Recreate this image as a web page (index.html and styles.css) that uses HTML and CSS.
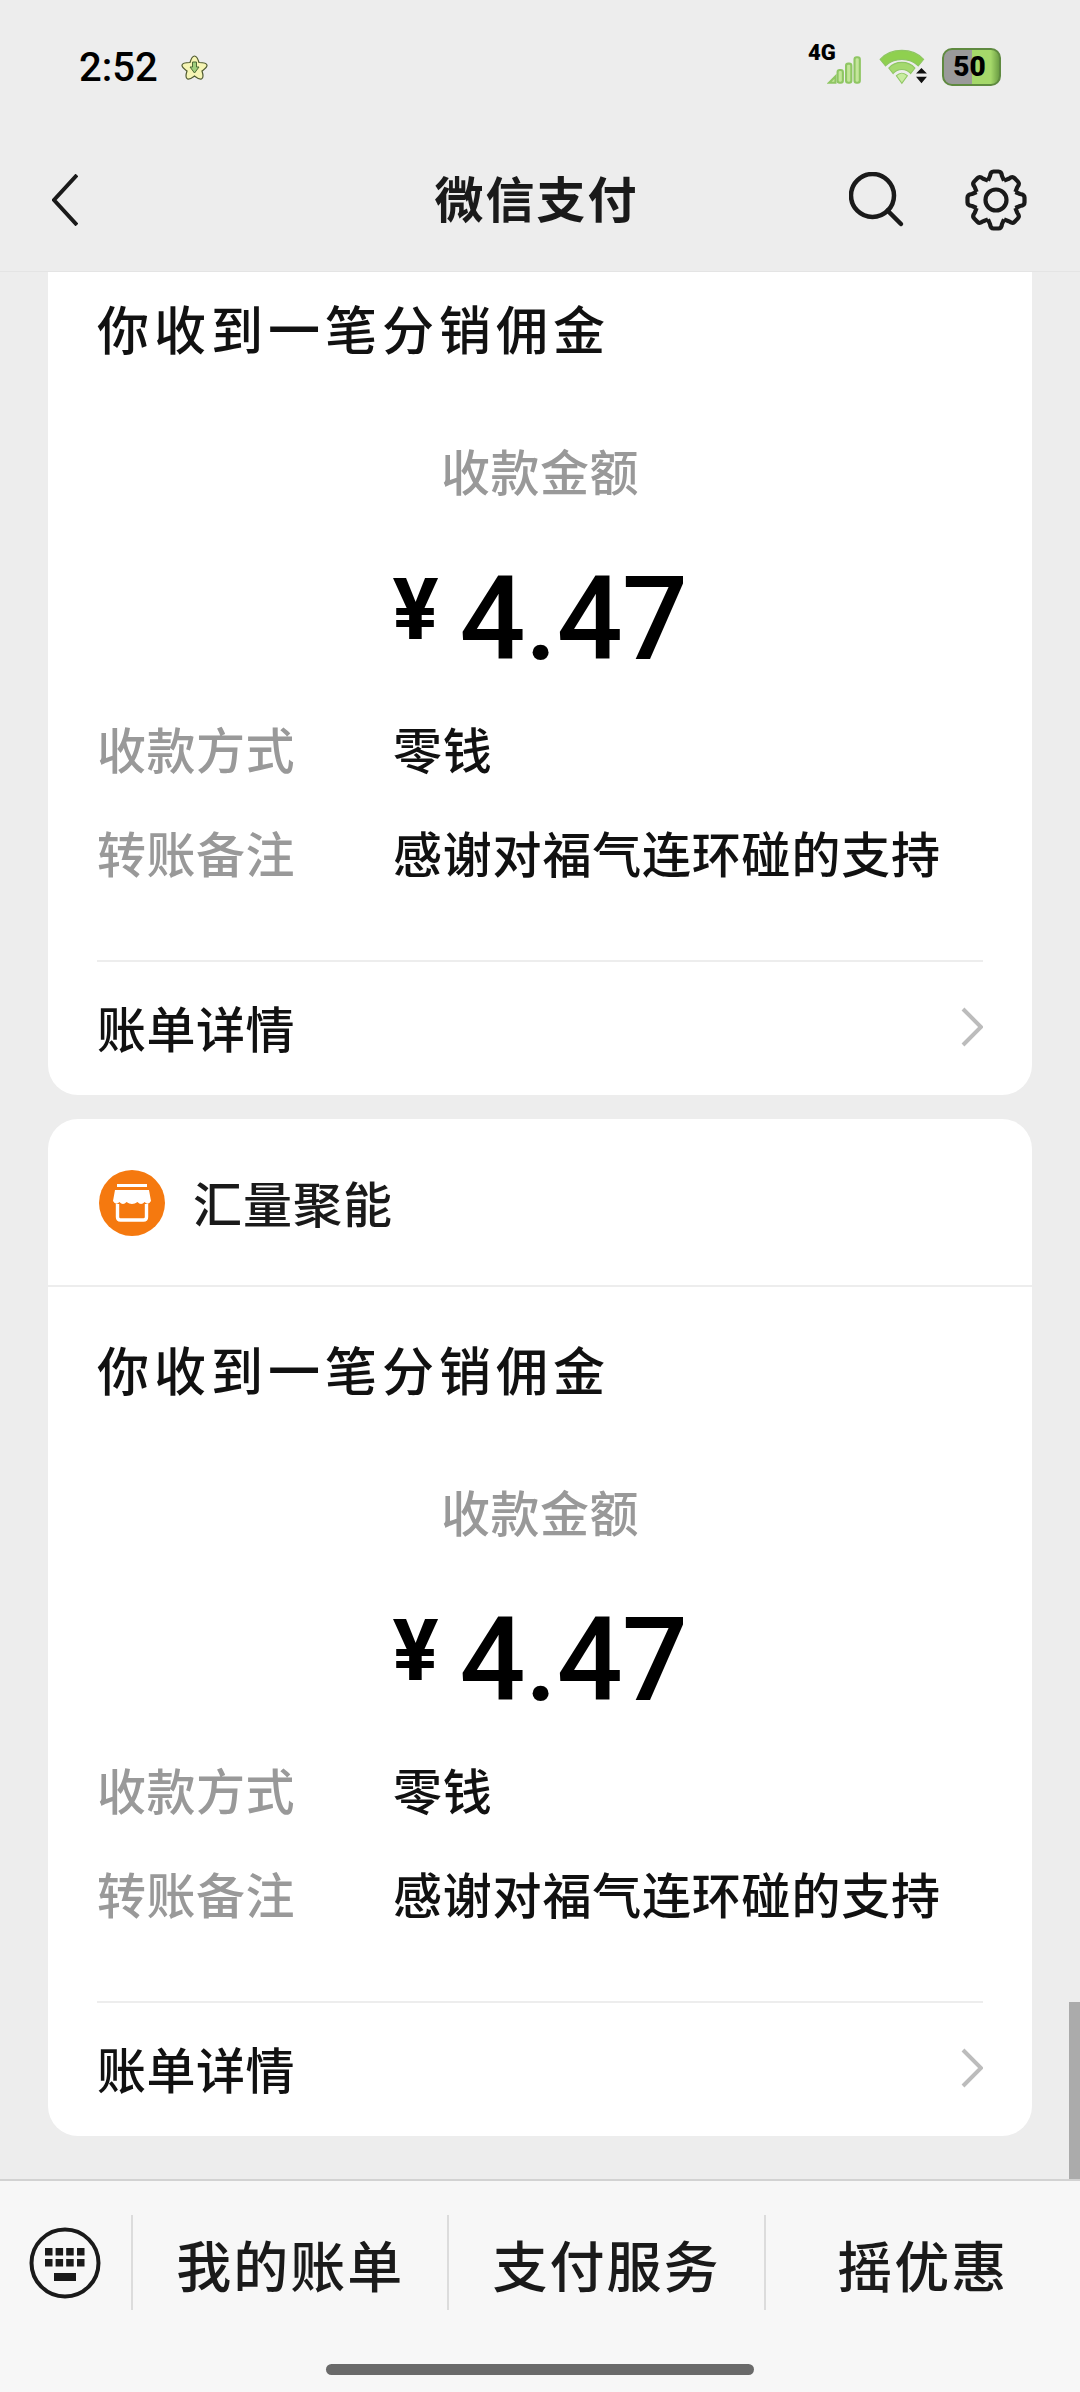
FILE: index.html
```html
<!DOCTYPE html>
<html lang="zh-CN">
<head>
<meta charset="utf-8">
<title>微信支付</title>
<link rel="stylesheet" href="styles.css">
</head>
<body>
<div class="page">
  <div class="status">
    <div class="status-left">
      <span class="time">2:52</span>
      <svg class="flower" viewBox="0 0 27 25"><path d="M13.5 1C15.500 1 17 4 18 7.500C21 7.500 25.500 7.500 26 10C26.300 12.500 23 14.500 21 16C22 19 22.500 23 20.500 24C18 24.700 15.500 22.500 13.500 21C11.500 22.500 9 24.700 6.500 24C4.500 23 5 19 6 16C4 14.500 .7 12.500 1 10C1.500 7.500 6 7.500 9 7.500C10 4 11.500 1 13.500 1Z" fill="#f6f5b4" stroke="#4f5a30" stroke-width="1.200"/><path d="M11.500 7H15.500V12H18L13.500 18L9 12H11.500Z" fill="#9fce7c" stroke="#4d6b35" stroke-width="1"/></svg>
    </div>
    <div class="status-right">
      <div class="net">
        <span class="net-label">4G</span>
        <svg class="signal" viewBox="0 0 34 28"><g fill="#c4e69a" stroke="#8fc663" stroke-width="2"><path d="M2 26L8 20V26Z"/><rect x="10" y="14" width="5" height="12" rx="2"/><rect x="18" y="8" width="5" height="18" rx="2"/><rect x="26" y="2" width="5" height="24" rx="2"/></g></svg>
      </div>
      <svg class="wifi" viewBox="2 4 45 32"><path d="M3 13C13 2 33 2 43 13L38 19C30 11 16 11 8 19Z" fill="#8fd04f" stroke="#8fc663"/><path d="M11 21C17 14 29 14 35 21L31 26C27 21 19 21 15 26Z" fill="#a4d96e" stroke="#8fc663"/><path d="M18 28C21 25 25 25 28 28L23 35Z" fill="#c8eca0" stroke="#8fc663"/><path d="M37 22L42 27H32ZM37 36L32 30H42Z" fill="#111" transform="translate(4 -1)"/></svg>
      <div class="battery"><span class="battery-level">50</span></div>
    </div>
  </div>

  <header class="nav">
    <svg class="nav-back" viewBox="0 0 26 52"><path d="M25 1L2 26L25 51" fill="none" stroke="#1a1a1a" stroke-width="4"/></svg>
    <h1 class="nav-title">微信支付</h1>
    <div class="nav-actions">
      <svg class="nav-search" viewBox="0 0 56 56"><circle cx="23.500" cy="23.500" r="21.500" fill="none" stroke="#1a1a1a" stroke-width="4.500"/><path d="M38.500 38.500L52 52" stroke="#1a1a1a" stroke-width="4.500" stroke-linecap="round"/></svg>
      <svg class="nav-gear" viewBox="-31 -31 62 62">
        <defs><path id="tooth" d="M-8.040 -19.400L-6 -24Q-5.500 -28.500 -2.500 -28.500L2.500 -28.500Q5.500 -28.500 6 -24L8.040 -19.400" fill="none" stroke="#1a1a1a" stroke-width="4.200" stroke-linejoin="round"/></defs>
        <use href="#tooth"/><use href="#tooth" transform="rotate(45)"/><use href="#tooth" transform="rotate(90)"/><use href="#tooth" transform="rotate(135)"/><use href="#tooth" transform="rotate(180)"/><use href="#tooth" transform="rotate(225)"/><use href="#tooth" transform="rotate(270)"/><use href="#tooth" transform="rotate(315)"/>
        <circle r="10.500" fill="none" stroke="#1a1a1a" stroke-width="4.200"/>
      </svg>
    </div>
  </header>

  <main class="list">
    <section class="card card-clipped">
      <div class="body body-clipped">
        <h2 class="title">你收到一笔分销佣金</h2>
        <p class="label">收款金额</p>
        <div class="amount"><span class="currency">¥</span><span class="value">4.47</span></div>
        <dl class="fields">
          <div class="field"><dt>收款方式</dt><dd>零钱</dd></div>
          <div class="field"><dt>转账备注</dt><dd>感谢对福气连环碰的支持</dd></div>
        </dl>
        <div class="detail"><span class="detail-text">账单详情</span><svg class="chev" viewBox="0 0 22 40"><path d="M2 2L20 20L2 38" fill="none" stroke="#bcbcbc" stroke-width="4"/></svg></div>
      </div>
    </section>

    <section class="card">
      <div class="merchant">
        <svg class="shop" viewBox="0 0 66 66"><circle cx="33" cy="33" r="33" fill="#f5790f"/><rect x="18" y="14" width="30" height="3" fill="#fff"/><path d="M16 20H50L52 31Q49 36 45.600 32Q42 36 38.500 32Q33 36 27.500 32Q24 36 20.400 32Q17 36 14 31Z" fill="#fff"/><path d="M18.500 34V47Q18.500 50 21.500 50H44.500Q47.500 50 47.500 47V34" fill="none" stroke="#fff" stroke-width="3.400"/></svg>
        <span class="merchant-name">汇量聚能</span>
      </div>
      <div class="body">
        <h2 class="title">你收到一笔分销佣金</h2>
        <p class="label">收款金额</p>
        <div class="amount"><span class="currency">¥</span><span class="value">4.47</span></div>
        <dl class="fields">
          <div class="field"><dt>收款方式</dt><dd>零钱</dd></div>
          <div class="field"><dt>转账备注</dt><dd>感谢对福气连环碰的支持</dd></div>
        </dl>
        <div class="detail"><span class="detail-text">账单详情</span><svg class="chev" viewBox="0 0 22 40"><path d="M2 2L20 20L2 38" fill="none" stroke="#bcbcbc" stroke-width="4"/></svg></div>
      </div>
    </section>
    <div class="scrollbar"></div>
  </main>

  <footer class="footer">
    <div class="menu">
      <div class="kbd">
        <svg class="kbd-icon" viewBox="0 0 72 72"><circle cx="36" cy="36" r="33.500" fill="none" stroke="#1a1a1a" stroke-width="4"/><path d="M16 21h7.500v7.500h-7.500zM26.600 21h7.500v7.500h-7.500zM37.200 21h7.500v7.500h-7.500zM48 21h7.500v7.500h-7.500zM16 32h7.500v7.500h-7.500zM26.600 32h7.500v7.500h-7.500zM37.200 32h7.500v7.500h-7.500zM48 32h7.500v7.500h-7.500zM25 46h22v8H25z" fill="#1a1a1a"/></svg>
      </div>
      <div class="menu-item">我的账单</div>
      <div class="menu-item">支付服务</div>
      <div class="menu-item">摇优惠</div>
    </div>
    <div class="home-bar"></div>
  </footer>
</div>
</body>
</html>
```
FILE: styles.css
```css
* { box-sizing: border-box; }
html, body { margin: 0; padding: 0; }
body {
  font-family: "Noto Sans CJK SC", "Noto Sans", sans-serif;
  background: #ededed;
  color: #111;
}
.page {
  width: 1080px;
  height: 2392px;
  display: flex;
  flex-direction: column;
  overflow: hidden;
}
.status {
  height: 100px;
  flex: none;
  display: flex;
  justify-content: space-between;
  align-items: center;
  padding: 36px 79px 0 79px;
}
.status-left { display: flex; align-items: center; gap: 23px; margin-top: -1px; }
.time {
  font-family: Roboto, sans-serif;
  font-weight: 500;
  font-size: 40px;
  line-height: 46px;
  color: #000;
}
.flower { width: 27px; height: 25px; display: block; }
.status-right { display: flex; align-items: center; margin-top: -3px; }
.net { position: relative; width: 56px; height: 40px; }
.net-label {
  position: absolute;
  left: 0;
  top: -6px;
  font-family: Roboto, sans-serif;
  font-weight: 900;
  font-size: 22px;
  line-height: 24px;
  color: #000;
}
.signal { position: absolute; left: 19px; top: 8px; width: 36px; height: 30px; }
.wifi { width: 49px; height: 36px; margin-left: 15px; margin-right: 14px; }
.battery {
  width: 59px;
  height: 38px;
  border-radius: 10px;
  border: 2px solid #5f8a40;
  background: linear-gradient(90deg, #9a9a9a 0 51%, #a5d86a 51% 85%, #6d9f45 100%);
  display: flex;
  align-items: center;
  justify-content: center;
  padding-right: 4px;
}
.battery-level {
  font-family: Roboto, sans-serif;
  font-weight: 900;
  font-size: 28px;
  line-height: 30px;
  color: #000;
}

.nav {
  height: 172px;
  flex: none;
  display: grid;
  grid-template-columns: 1fr auto 1fr;
  align-items: center;
  padding: 28px 53px 0 52px;
  border-bottom: 1px solid #e4e4e4;
}
.nav-back { width: 26px; height: 52px; display: block; }
.nav-title {
  margin: -5px 6px 0 0;
  font-size: 49px;
  font-weight: 700;
  line-height: 60px;
  letter-spacing: 2px;
  color: #1a1a1a;
}
.nav-actions { display: flex; align-items: center; justify-content: flex-end; gap: 60px; }
.nav-search { width: 56px; height: 56px; display: block; }
.nav-gear { width: 62px; height: 62px; display: block; }

.list {
  flex: 1;
  position: relative;
  overflow: hidden;
  padding: 0 48px;
  display: flex;
  flex-direction: column;
  gap: 24px;
}
.scrollbar {
  position: absolute;
  right: 0;
  bottom: 0;
  width: 11px;
  height: 177px;
  background: #ababab;
}
.card {
  background: #fff;
  border-radius: 30px;
  flex: none;
}
.card-clipped { border-radius: 0 0 30px 30px; }
.merchant {
  height: 168px;
  border-bottom: 2px solid #ededed;
  display: flex;
  align-items: center;
  gap: 28px;
  padding: 2px 51px 0;
}
.shop { width: 66px; height: 66px; display: block; }
.merchant-name {
  font-size: 49px;
  font-weight: 500;
  line-height: 60px;
  letter-spacing: 1px;
  margin-top: -3px;
  color: #1a1a1a;
}
.body { padding: 47px 49px 0; }
.body-clipped { padding-top: 21px; }
.title {
  margin: 0;
  font-size: 52px;
  font-weight: 500;
  line-height: 70px;
  letter-spacing: 5px;
  color: #111;
}
.label {
  margin: 77px 0 0;
  text-align: center;
  font-size: 49px;
  font-weight: 500;
  line-height: 60px;
  letter-spacing: 0.500px;
  color: #999;
}
.amount {
  margin-top: 49px;
  height: 140px;
  display: flex;
  justify-content: center;
  color: #000;
  font-family: Roboto, sans-serif;
  font-weight: 500;
}
.currency { font-size: 86px; font-weight: 700; line-height: 122px; margin-right: 21px; }
.value { font-size: 116px; line-height: 140px; letter-spacing: -0.500px; }
.fields { margin: 29px 0 0; display: flex; flex-direction: column; gap: 44px; }
.field { display: flex; font-size: 49px; font-weight: 500; line-height: 60px; letter-spacing: 0.500px; }
.field dt { width: 296px; color: #999; flex: none; }
.field dd { margin: 0; color: #111; letter-spacing: 0.800px; }
.detail {
  margin-top: 78px;
  height: 135px;
  border-top: 2px solid #ededed;
  display: flex;
  justify-content: space-between;
  align-items: center;
  font-size: 49px;
  font-weight: 500;
  letter-spacing: 0.500px;
  color: #111;
}
.detail-text { line-height: 60px; margin-top: -4px; }
.chev { width: 22px; height: 40px; display: block; margin-top: -4px; }

.footer {
  height: 213px;
  flex: none;
  background: #f7f7f7;
  border-top: 2px solid #d2d2d2;
  display: flex;
  flex-direction: column;
}
.menu { display: flex; align-items: center; margin-top: 34px; height: 95px; }
.kbd { width: 131px; display: flex; justify-content: center; padding-right: 2px; }
.kbd-icon { width: 72px; height: 72px; display: block; }
.menu-item {
  flex: 1;
  height: 95px;
  border-left: 2px solid #dcdcdc;
  display: flex;
  align-items: center;
  justify-content: center;
  font-size: 55px;
  font-weight: 500;
  letter-spacing: 2px;
  color: #1a1a1a;
}
.home-bar {
  width: 428px;
  height: 11px;
  border-radius: 6px;
  background: #6a6a6a;
  margin: 54px auto 0;
}
```
